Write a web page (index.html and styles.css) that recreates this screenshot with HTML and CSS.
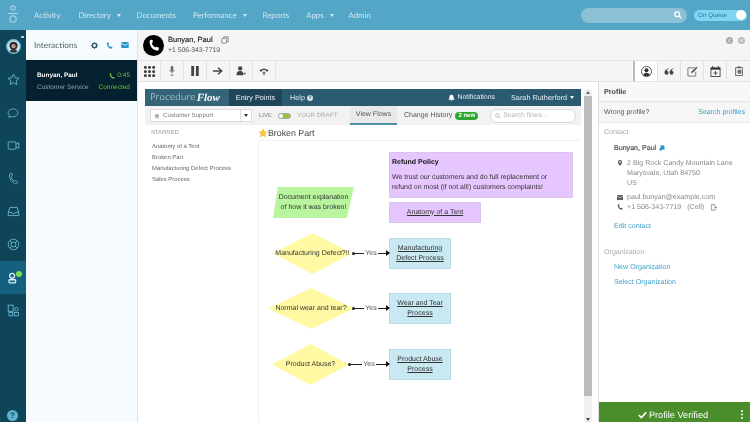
FILE: index.html
```html
<!DOCTYPE html>
<html lang="en">
<head>
<meta charset="utf-8">
<title>Interactions</title>
<link rel="stylesheet" href="styles.css">
</head>
<body>
<div class="app">
  <header class="top">
    <svg class="logo" viewBox="0 0 14 20" width="14" height="20"><circle cx="7" cy="3" r="2.2" class="ln"/><path d="M2 8.5h10" class="ln"/><circle cx="7" cy="14" r="3.2" class="ln"/></svg>
    <nav class="nav">
      <a class="n1">Activity</a>
      <a class="n2">Directory <i class="caret"></i></a>
      <a class="n3">Documents</a>
      <a class="n4">Performance <i class="caret"></i></a>
      <a class="n5">Reports</a>
      <a class="n6">Apps <i class="caret"></i></a>
      <a class="n7">Admin</a>
    </nav>
    <div class="global-search">
      <svg viewBox="0 0 10 10" width="8" height="8"><circle cx="4" cy="4" r="3" fill="none" stroke="#fff" stroke-width="1.6"/><path d="M6.3 6.3 9 9" stroke="#fff" stroke-width="1.8"/></svg>
    </div>
    <div class="queue"><span>On Queue</span><i></i></div>
  </header>
  <div class="body">
    <aside class="rail">
      <div class="avatar-wrap">
        <svg viewBox="0 0 20 20" width="15" height="15"><circle cx="10" cy="10" r="9" fill="#d8e6ea" stroke="#6fc3df" stroke-width="1.8"/><circle cx="10" cy="9" r="5.500" fill="#2c2a2c"/><circle cx="10" cy="9.500" r="2.800" fill="#b99d93"/><path d="M5 16c2-3 8-3 10 0l-2 2H7z" fill="#333"/></svg>
        <b class="dots"></b>
      </div>
      <a class="rail-item"><svg viewBox="0 0 16 16" width="13" height="13"><path d="m8 1.500 2 4.300 4.700.6-3.500 3.200.9 4.700L8 12l-4.100 2.300.9-4.700L1.300 6.400 6 5.800z" class="ri"/></svg></a>
      <a class="rail-item"><svg viewBox="0 0 16 16" width="12" height="12"><path d="M8 2.500c3.600 0 6.500 2.300 6.500 5.200S11.600 13 8 13c-.9 0-1.800-.1-2.500-.4L2.500 14l.7-3C2 10 1.500 9 1.500 7.700 1.500 4.800 4.400 2.500 8 2.500z" class="ri"/></svg></a>
      <a class="rail-item"><svg viewBox="0 0 16 16" width="13" height="13"><rect x="1.500" y="3.500" width="9.500" height="9" rx="1" class="ri"/><path d="M11 6.500 14.500 4.500v7L11 9.500" class="ri"/></svg></a>
      <a class="rail-item"><svg viewBox="0 0 16 16" width="13" height="13"><path d="M4 1.500 6 2c.3 1.500.4 2.300.2 3.500l-1 .8c.6 2 1.700 3.700 3.500 5l1.300-.6c1-.2 2 .4 3 1.500l-.7 1.800c-1 .8-2.200.6-3.200 0C5.500 11.800 3.500 8.500 3 5c-.1-1.500.2-2.700 1-3.500z" class="ri"/></svg></a>
      <a class="rail-item"><svg viewBox="0 0 16 16" width="13" height="13"><path d="M1.500 9 3.500 3h9l2 6v4h-13zM1.500 9h4.200l.8 1.500h3l.8-1.500h4.200" class="ri"/></svg></a>
      <a class="rail-item"><svg viewBox="0 0 16 16" width="13" height="13"><circle cx="8" cy="8" r="6.500" class="ri"/><circle cx="8" cy="8" r="3" class="ri"/><path d="M3.500 3.500 6 6M12.500 3.500 10 6M3.500 12.500 6 10M12.500 12.500 10 10" class="ri"/></svg></a>
      <a class="rail-item active"><svg viewBox="0 0 16 16" width="14" height="14"><circle cx="7" cy="5.500" r="2.800" class="rw"/><rect x="3.500" y="10" width="7.500" height="3.500" rx=".8" class="rw"/></svg><b class="online"></b></a>
      <a class="rail-item"><svg viewBox="0 0 16 16" width="13" height="13"><rect x="1.500" y="1.500" width="6" height="7.500" class="ri"/><circle cx="11.500" cy="6.500" r="2.200" class="ri"/><rect x="2.500" y="10.500" width="4.500" height="4" class="ri"/><rect x="9" y="10.500" width="5" height="4" class="ri"/></svg></a>
      <a class="help">?</a>
    </aside>
    <section class="interactions">
      <div class="int-head">
        <span>Interactions</span>
        <div class="int-tools">
          <svg viewBox="0 0 10 10" width="7" height="7"><circle cx="5" cy="5" r="3" fill="none" stroke="#34596b" stroke-width="2"/><path d="M5 0v2M5 8v2M0 5h2M8 5h2M1.500 1.500l1.400 1.400M7.100 7.100l1.400 1.400M8.500 1.500 7.100 2.900M2.900 7.100 1.500 8.500" stroke="#34596b" stroke-width="1.200"/></svg>
          <svg viewBox="0 0 10 10" width="7" height="7"><path d="M2 .5 4 1 3.800 3.200 3.200 3.800C3.800 5.200 4.800 6.300 6 7l.9-.6 2.300.8-.4 2.100C7 10 4.500 9 2.800 6.800 1.200 4.800.8 2 2 .5z" fill="#2a94c6"/></svg>
          <svg viewBox="0 0 10 8" width="8" height="6"><rect width="10" height="8" rx="1" fill="#2a94c6"/><path d="m0 1.500 5 3 5-3" fill="none" stroke="#f5fbff" stroke-width="1"/></svg>
        </div>
      </div>
      <div class="card">
        <div class="card-row"><b>Bunyan, Paul</b><span class="time"><svg viewBox="0 0 10 10" width="6" height="6"><path d="M2 .5 4 1 3.800 3.200 3.200 3.800C3.800 5.200 4.800 6.300 6 7l.9-.6 2.300.8-.4 2.100C7 10 4.500 9 2.800 6.800 1.200 4.800.8 2 2 .5z" fill="#6fbf3a"/></svg> 0:45</span></div>
        <div class="card-row sub"><span>Customer Service</span><span class="ok">Connected</span></div>
      </div>
    </section>
    <main class="main">
      <div class="call-head">
        <span class="callicon"><svg viewBox="0 0 10 10" width="12" height="12"><path d="M2 .5 4 1 3.800 3.200 3.200 3.800C3.800 5.200 4.800 6.300 6 7l.9-.6 2.300.8-.4 2.100C7 10 4.500 9 2.800 6.800 1.200 4.800.8 2 2 .5z" fill="#fff"/></svg></span>
        <div class="call-id">
          <div class="call-name">Bunyan, Paul <svg viewBox="0 0 10 10" width="8" height="8"><rect x="1" y="3" width="6" height="6" rx="1" class="cp"/><path d="M3.500 3V1h5.500v6H7" class="cp"/></svg></div>
          <div class="call-phone">+1 506-343-7719</div>
        </div>
        <div class="nav-dots">
          <svg viewBox="0 0 8 8" width="7" height="7"><circle cx="4" cy="4" r="4" fill="#aaa"/><path d="M4.800 2 3 4l1.800 2" fill="none" stroke="#fff"/></svg>
          <svg viewBox="0 0 8 8" width="7" height="7"><circle cx="4" cy="4" r="4" fill="#bbb"/><path d="m2.500 2.500 3 3m0-3-3 3" fill="none" stroke="#fff" stroke-width=".8"/></svg>
        </div>
      </div>
      <div class="toolbar">
        <div class="tool-group">
          <a class="tool"><svg viewBox="0 0 12 12" width="11" height="11"><g fill="#3a3a3a"><rect x="0" y="0" width="3" height="3" rx="1"/><rect x="4.500" y="0" width="3" height="3" rx="1"/><rect x="9" y="0" width="3" height="3" rx="1"/><rect x="0" y="4.500" width="3" height="3" rx="1"/><rect x="4.500" y="4.500" width="3" height="3" rx="1"/><rect x="9" y="4.500" width="3" height="3" rx="1"/><rect x="0" y="9" width="3" height="3" rx="1"/><rect x="4.500" y="9" width="3" height="3" rx="1"/><rect x="9" y="9" width="3" height="3" rx="1"/></g></svg></a>
          <a class="tool"><svg viewBox="0 0 12 12" width="10" height="10"><rect x="4.500" y="0" width="3" height="7" rx="1.500" fill="#666"/><path d="M3 5c0 3 6 3 6 0M6 8v3M4 11.500h4" fill="none" stroke="#888" stroke-width="1"/></svg></a>
          <a class="tool"><svg viewBox="0 0 12 12" width="10" height="10"><rect x="1.500" width="3.400" height="12" fill="#444"/><rect x="7.100" width="3.400" height="12" fill="#444"/></svg></a>
          <a class="tool"><svg viewBox="0 0 12 12" width="10" height="10"><path d="M0 6h10M6 2l4.500 4L6 10" fill="none" stroke="#444" stroke-width="1.700"/></svg></a>
          <a class="tool"><svg viewBox="0 0 12 12" width="10" height="10"><circle cx="5" cy="3" r="2.600" fill="#444"/><path d="M.5 11c0-3.500 1.500-5 4.500-5s4 1.500 4 5z" fill="#444"/><path d="M9 9h3M10.500 7.500v3" stroke="#666" stroke-width=".9"/></svg></a>
          <a class="tool"><svg viewBox="0 0 12 12" width="10" height="10"><path d="M.5 5.500C3 2.500 9 2.500 11.500 5.500L10 7 8 6V4.800H4V6L2 7z" fill="#444"/><path d="M6 11V7M4.300 8.500 6 7l1.700 1.500" fill="none" stroke="#444" stroke-width="1.200"/></svg></a>
        </div>
        <div class="tool-group right">
          <a class="tool cur"><svg viewBox="0 0 12 12" width="11" height="11"><circle cx="6" cy="6" r="5.500" fill="none" stroke="#333" stroke-width=".9"/><circle cx="6" cy="4.600" r="2.200" fill="#333"/><path d="M2.500 10c.5-2 2-2.700 3.500-2.700s3 .7 3.500 2.700C7.500 11.300 4.500 11.300 2.500 10z" fill="#333"/></svg></a>
          <a class="tool"><svg viewBox="0 0 12 8" width="10" height="7"><path d="M5.300 0C2.800.8.600 2.500.600 5.300a2.400 2.400 0 1 0 2.400-2.300C3.500 2 4.300 1.300 5.500 1zM11.300 0C8.800.8 6.600 2.500 6.600 5.300A2.400 2.400 0 1 0 9 3c.5-1 1.300-1.700 2.500-2z" fill="#444"/></svg></a>
          <a class="tool"><svg viewBox="0 0 12 12" width="11" height="11"><path d="M8.500 2H1v9h8.500V6" fill="none" stroke="#666" stroke-width=".9"/><path d="M4.500 8 5 6 10.300.7l1.200 1.200L6.200 7.300z" fill="#555"/></svg></a>
          <a class="tool"><svg viewBox="0 0 12 12" width="11" height="11"><rect x="1" y="2" width="10" height="9.500" fill="none" stroke="#333" stroke-width=".9"/><path d="M1 2h10v2H1z" fill="#333"/><path d="M3 0v3M9 0v3" stroke="#333"/><path d="M6 5.500v4.500M3.800 7.700h4.400" stroke="#444"/></svg></a>
          <a class="tool last"><svg viewBox="0 0 12 12" width="10" height="10"><path d="M3.500 2H2v9.500h8V2H8.500" fill="none" stroke="#444"/><rect x="4" y=".7" width="4" height="2" fill="#444"/><circle cx="6.500" cy="7" r="2.500" fill="#555"/><path d="m5.300 7 1 1 1.500-1.700" fill="none" stroke="#fff" stroke-width=".7"/></svg></a>
        </div>
      </div>
      <div class="split">
        <div class="work">
          <div class="pf">
            <div class="pf-bar">
              <div class="brand"><span class="brand-a">Procedure</span><span class="brand-b">Flow</span></div>
              <a class="pf-tab">Entry Points</a>
              <a class="pf-help">Help <i>?</i></a>
              <div class="pf-right">
                <span class="pf-note"><svg viewBox="0 0 10 10" width="7" height="8"><path d="M5 .5c2 0 3 1.500 3 3.500 0 2 1 3 1.500 3.500h-9C1 7 2 6 2 4 2 2 3 .5 5 .5z" fill="#fff"/><path d="M4 8.500h2v1H4z" fill="#fff"/></svg> Notifications</span>
                <span class="pf-user">Sarah Rutherford <i class="caret w"></i></span>
              </div>
            </div>
            <div class="pf-sub">
              <div class="select"><span class="sel-val"><svg viewBox="0 0 10 10" width="6" height="6"><path d="M5 1 .5 5H2v4h2.300V6.500h1.400V9H8V5h1.500z" fill="#aaa"/></svg> Customer Support</span><span class="sel-c"><i class="caret d"></i></span></div>
              <span class="live">LIVE</span>
              <span class="toggle"><i></i></span>
              <span class="draft">YOUR DRAFT</span>
              <a class="tab on">View Flows</a>
              <a class="tab">Change History</a>
              <span class="badge">2 new</span>
              <div class="flow-search"><svg viewBox="0 0 10 10" width="6" height="6"><circle cx="4" cy="4" r="3" fill="none" stroke="#aaa" stroke-width="1.200"/><path d="M6.300 6.300 9 9" stroke="#aaa" stroke-width="1.400"/></svg> Search flows...</div>
            </div>
            <div class="pf-body">
              <div class="starred">
                <h4>STARRED</h4>
                <ul>
                  <li>Anatomy of a Tent</li>
                  <li>Broken Part</li>
                  <li>Manufacturing Defect Process</li>
                  <li>Sales Process</li>
                </ul>
              </div>
              <div class="flow">
                <h2><svg viewBox="0 0 16 16" width="10" height="10"><path d="m8 .5 2.300 5 5.200.6-3.800 3.600 1 5.300L8 12.300 3.300 15l1-5.300L.5 6.100l5.200-.6z" fill="#f4c542"/></svg>Broken Part</h2>
                <div class="canvas">
                  <div class="node policy"><b>Refund Policy</b><p>We trust our customers and do full replacement or refund on most (if not all!) customers complaints!</p></div>
                  <div class="node anatomy"><u>Anatomy of a Tent</u></div>
                  <div class="node para"><span>Document explanation<br>of how it was broken!</span></div>
                  <div class="node dia d1">Manufacturing Defect?!!</div>
                  <div class="node dia d2">Normal wear and tear?</div>
                  <div class="node dia d3">Product Abuse?</div>
                  <div class="node box b1"><u>Manufacturing Defect Process</u></div>
                  <div class="node box b2"><u>Wear and Tear Process</u></div>
                  <div class="node box b3"><u>Product Abuse Process</u></div>
                  <div class="link l1"><span>Yes</span></div>
                  <div class="link l2"><span>Yes</span></div>
                  <div class="link l3"><span>Yes</span></div>
                </div>
              </div>
            </div>
          </div>
          <div class="scroll"><i class="up"></i><b></b><i class="down"></i></div>
        </div>
        <aside class="profile">
          <div class="pr-head">Profile</div>
          <div class="pr-wrong"><span>Wrong profile?</span><a>Search profiles</a></div>
          <div class="pr-content">
            <h5>Contact</h5>
            <div class="pr-name">Bunyan, Paul <svg viewBox="0 0 10 10" width="6" height="6"><path d="M1 1h8v8L6.500 6.500 3 10 0 7l3.500-3.500z" fill="#2a94c6"/></svg></div>
            <div class="pr-line addr"><svg viewBox="0 0 10 10" width="6" height="6"><path d="M5 0a3.500 3.500 0 0 0-3.500 3.500C1.500 6 5 10 5 10s3.500-4 3.500-6.500A3.500 3.500 0 0 0 5 0zm0 5a1.500 1.500 0 1 1 0-3 1.500 1.500 0 0 1 0 3z" fill="#555"/></svg><span>2 Big Rock Candy Mountain Lane<br>Marysvale, Utah 84750<br>US</span></div>
            <div class="pr-line mail"><svg viewBox="0 0 10 8" width="6" height="5"><rect width="10" height="8" fill="#555"/><path d="m0 1.500 5 3 5-3" fill="none" stroke="#fff"/></svg><span>paul.bunyan@example.com</span></div>
            <div class="pr-line tel"><svg viewBox="0 0 10 10" width="6" height="6"><path d="M2 .5 4 1 3.800 3.200 3.200 3.800C3.800 5.200 4.800 6.300 6 7l.9-.6 2.300.8-.4 2.100C7 10 4.500 9 2.800 6.800 1.200 4.800.8 2 2 .5z" fill="#555"/></svg><span>+1 506-343-7719 &nbsp; (Cell)</span><svg class="dev" viewBox="0 0 10 10" width="6" height="7"><path d="M6.500 2.500V.5h-6v9h6v-2" fill="none" stroke="#555"/><path d="M3 5h4V3l3 2-3 2V5.500" fill="#555"/></svg></div>
            <a class="pr-link edit">Edit contact</a>
            <h5 class="org">Organization</h5>
            <a class="pr-link">New Organization</a>
            <a class="pr-link">Select Organization</a>
          </div>
          <div class="verified"><span><svg viewBox="0 0 12 10" width="9" height="8"><path d="m1 5 3.500 3.500L11 1.500" fill="none" stroke="#fff" stroke-width="2.200"/></svg> Profile Verified</span><i class="kebab"></i></div>
        </aside>
      </div>
    </main>
  </div>
</div>
</body>
</html>
```
FILE: styles.css
```css
* { box-sizing: border-box; }
html, body { margin: 0; height: 100%; overflow: hidden; }
body { font-family: "Liberation Sans", Arial, sans-serif; color: #444; background: #fff; text-rendering: geometricPrecision; }
a { display: block; }
i { font-style: normal; }
svg { display: block; flex: none; }
.app { width: 750px; height: 422px; display: flex; flex-direction: column; overflow: hidden; filter: blur(.25px); }

/* top bar */
.top { height: 30px; background: #53a6c6; display: flex; align-items: center; padding-left: 6px; flex: none; }
.logo .ln { fill: none; stroke: #a5d3e5; stroke-width: 1.2; }
.nav { display: flex; font: 7.800px Lato, sans-serif; color: #d3e9f2; margin-left: 14px; width: 547px; flex: none; }
.nav a { white-space: nowrap; }
.n2 { margin-left: 18px; } .n3 { margin-left: 16px; } .n4 { margin-left: 17px; }
.n5 { margin-left: 16px; } .n6 { margin-left: 17px; } .n7 { margin-left: 15px; }
.caret { display: inline-block; border: 2.500px solid transparent; border-top: 3px solid #d3e9f2; border-bottom: 0; margin-left: 4px; vertical-align: 1px; }
.caret.w { border-top-color: #fff; margin-left: 1px; }
.caret.d { border-top-color: #333; margin: 0; }
.global-search { width: 106px; height: 15px; border-radius: 8px; background: #8cc0d5; display: flex; align-items: center; justify-content: flex-end; padding-right: 5px; }
.queue { width: 53px; height: 11px; border-radius: 6px; background: #7fd6f2; margin-left: 7px; display: flex; align-items: center; justify-content: space-between; padding-left: 4px; font: 6.300px "Liberation Sans", sans-serif; color: #2a7a9a; }
.queue i { width: 10px; height: 10px; border-radius: 50%; background: #fff; margin-right: 1px; }

.body { flex: 1; display: flex; min-height: 0; }

/* rail */
.rail { width: 26px; background: #0f4558; display: flex; flex-direction: column; align-items: stretch; position: relative; flex: none; }
.avatar-wrap { height: 33px; display: flex; align-items: center; justify-content: center; position: relative; }
.dots { position: absolute; right: 2px; top: 6px; width: 3px; height: 2px; background: #9fd4e6; }
.rail-item { height: 33px; display: flex; align-items: center; justify-content: center; position: relative; }
.rail-item.active { background: #15607e; }
.ri { fill: none; stroke: #6db6d2; stroke-width: 1.100; }
.rw { fill: none; stroke: #d9eef6; stroke-width: 1.500; }
.online { position: absolute; right: 4px; top: 10px; width: 6px; height: 6px; border-radius: 50%; background: #7be04b; }
.help { position: absolute; left: 7px; bottom: 1px; width: 11px; height: 11px; border-radius: 50%; background: #5fb2d0; color: #0f4558; font: bold 8px/11px "Liberation Sans", sans-serif; text-align: center; }

/* interactions */
.interactions { width: 112px; background: #f5fbff; border-right: 1px solid #dfe3e6; flex: none; }
.int-head { height: 30px; display: flex; align-items: center; justify-content: space-between; padding: 0 8px; font: 8.300px Lato, sans-serif; color: #566; }
.int-tools { display: flex; align-items: center; gap: 8px; }
.card { height: 41px; background: #05202f; padding: 10px 7px 0 11px; }
.card-row { display: flex; justify-content: space-between; align-items: center; font-size: 6.500px; color: #fff; height: 11px; }
.card-row b { font-size: 6.400px; }
.time { color: #6fbf3a; display: flex; align-items: center; gap: 2px; }
.sub { color: #8fa5ad; margin-top: 1px; }
.ok { color: #6fbf3a; }

/* main */
.main { flex: 1; display: flex; flex-direction: column; background: #fff; min-width: 0; }
.call-head { height: 30px; background: #f5f5f5; display: flex; align-items: center; padding: 0 5px; }
.callicon { width: 21px; height: 21px; border-radius: 50%; background: #000; display: flex; align-items: center; justify-content: center; }
.call-id { margin-left: 4px; flex: 1; }
.call-name { font-size: 7.500px; color: #222; display: flex; align-items: center; gap: 8px; line-height: 11px; -webkit-text-stroke: .15px #222; }
.cp { fill: none; stroke: #666; stroke-width: .9; }
.call-phone { font-size: 6.800px; color: #555; line-height: 11px; }
.nav-dots { display: flex; gap: 5px; align-self: flex-start; margin-top: 7px; }
.toolbar { height: 22px; background: #f5f5f5; border-top: 1px solid #e3e3e3; border-bottom: 1px solid #e3e3e3; display: flex; justify-content: space-between; flex: none; }
.tool-group { display: flex; }
.tool-group.right { border-left: 2px solid #bcbcbc; }
.tool { width: 23px; height: 100%; display: flex; align-items: center; justify-content: center; border-right: 1px solid #e3e3e3; }
.tool.cur { background: #fff; }
.tool.last { border-right: 0; }

.split { flex: 1; display: flex; min-height: 0; }
.work { width: 460px; display: flex; padding: 7px 6px 0 7px; gap: 3px; flex: none; }
.pf { width: 436px; display: flex; flex-direction: column; }
.pf-bar { height: 17px; background: #2a5a70; display: flex; align-items: center; color: #eef; font-size: 7.300px; line-height: 10px; flex: none; }
.brand { width: 84px; height: 100%; background: #336478; display: flex; align-items: center; padding-left: 5px; color: #d8e6ec; }
.brand-a { font: 300 9.500px Lato, sans-serif; letter-spacing: .45px; }
.brand-b { font: italic bold 11px "Liberation Serif", serif; color: #fff; margin-left: 1px; }
.pf-tab { width: 53px; height: 100%; background: #1f4658; display: flex; align-items: center; justify-content: center; }
.pf-help { margin-left: 8px; display: flex; align-items: center; gap: 2px; color: #d6e3e9; }
.pf-help i { width: 6px; height: 6px; background: #d6e3e9; color: #2a5a70; border-radius: 50%; font: bold 5px/6px "Liberation Sans", sans-serif; text-align: center; }
.pf-right { margin-left: auto; display: flex; align-items: center; gap: 16px; padding-right: 7px; color: #e6eef2; }
.pf-note { display: flex; align-items: center; gap: 2px; font-size: 6.900px; }
.pf-sub { height: 19px; background: #f2f2f2; display: flex; align-items: center; padding-left: 5px; color: #666; flex: none; white-space: nowrap; }
.select { width: 102px; height: 13px; background: #fff; border: 1px solid #dcdcdc; display: flex; font-size: 6.200px; color: #777; flex: none; }
.sel-val { flex: 1; display: flex; align-items: center; gap: 3px; padding-left: 3px; }
.sel-c { width: 11px; border-left: 1px solid #dcdcdc; display: flex; align-items: center; justify-content: center; }
.live { margin-left: 7px; width: 13px; font-size: 6px; color: #777; flex: none; }
.toggle { width: 13px; height: 6px; margin-left: 6px; border-radius: 3px; background: #9ac23c; border: 1px solid #aaa; position: relative; flex: none; }
.toggle i { position: absolute; left: 0; top: 0; width: 4px; height: 4px; border-radius: 50%; background: #fff; }
.draft { margin-left: 6px; font-size: 6.200px; color: #aaa; width: 53px; flex: none; }
.tab { height: 19px; line-height: 19px; padding: 0 7px; font-size: 7px; color: #555; flex: none; }
.tab.on { background: #e9e9e9; border-bottom: 2px solid #4d8eab; line-height: 18px; width: 47px; padding: 0; text-align: center; }
.badge { background: #2fa52f; color: #fff; font: bold 6px/8px "Liberation Sans", sans-serif; border-radius: 4px; width: 23px; height: 8px; text-align: center; margin-left: -4px; flex: none; }
.flow-search { width: 86px; height: 14px; border-radius: 7px; border: 1px solid #d8d8d8; background: #fff; margin-left: 12px; display: flex; align-items: center; gap: 2px; padding-left: 4px; font-size: 6.800px; color: #b5b5b5; flex: none; }
.pf-body { flex: 1; display: flex; min-height: 0; }
.starred { width: 113px; padding: 4px 0 0 6px; flex: none; }
.starred h4 { margin: 0; font: 400 5.900px/8px "Liberation Sans", sans-serif; color: #999; }
.starred ul { list-style: none; margin: 5px 0 0 1px; padding: 0; font-size: 5.900px; line-height: 11px; color: #666; }
.flow { flex: 1; position: relative; min-width: 0; }
.flow h2 { margin: 0; height: 16px; padding-top: 1px; display: flex; align-items: center; font: 400 8.800px "Liberation Sans", sans-serif; color: #444; border-bottom: 1px solid #f0f0f0; }
.canvas { position: relative; height: 300px; border-left: 1px solid #f0f0f0; isolation: isolate; }
.node { position: absolute; font-size: 7px; line-height: 10px; color: #333; display: flex; align-items: center; justify-content: center; text-align: center; }
.policy { left: 130px; top: 11px; width: 184px; height: 46px; background: #e6c6ff; border: 1px solid #dcc2ee; display: block; text-align: left; padding: 5px 12px 5px 2px; }
.policy b { color: #111; display: block; }
.policy p { margin: 5px 0 0; }
.anatomy { left: 130px; top: 61px; width: 92px; height: 21px; background: #e6c6ff; border: 1px solid #dcc2ee; }
.para { left: 14px; top: 46px; width: 81px; height: 31px; white-space: nowrap; }
.para::before { content: ""; position: absolute; inset: 0; z-index: -1; background: #b8f59e; clip-path: polygon(6% 0, 100% 0, 91% 100%, 0 100%); }
.dia { white-space: nowrap; }
.dia::before { content: ""; position: absolute; inset: 0; z-index: -1; background: #fff9a3; clip-path: polygon(50% 0, 100% 50%, 50% 100%, 0 50%); }
.d1 { left: 14px; top: 92px; width: 79px; height: 41px; }
.d2 { left: 9px; top: 147px; width: 86px; height: 41px; }
.d3 { left: 13px; top: 203px; width: 77px; height: 41px; }
.box { left: 130px; width: 62px; height: 31px; background: #c8e8f2; border: 1px solid #bcdde8; padding: 0 3px; }
.b1 { top: 97px; } .b2 { top: 152px; } .b3 { top: 208px; }
.link { position: absolute; height: 1px; background: #222; display: flex; justify-content: center; align-items: center; font-size: 7px; }
.link span { background: #fff; padding: 0 1px; color: #555; }
.link::before { content: ""; position: absolute; left: -1px; top: -1px; width: 3px; height: 3px; border-radius: 50%; background: #222; }
.link::after { content: ""; position: absolute; right: -1px; top: -3px; border-left: 4px solid #111; border-top: 3.500px solid transparent; border-bottom: 3.500px solid transparent; }
.l1 { left: 94px; top: 112px; width: 36px; }
.l2 { left: 94px; top: 167px; width: 36px; }
.l3 { left: 90px; top: 223px; width: 40px; }
.scroll { width: 8px; background: #f0f0f0; display: flex; flex-direction: column; align-items: center; flex: none; }
.scroll b { width: 8px; height: 300px; background: #bcbcbc; margin-top: 2px; flex: none; }
.up, .down { display: block; border: 2px solid transparent; }
.up { border-bottom: 3px solid #666; border-top: 0; margin-top: 2px; }
.down { border-top: 3px solid #444; border-bottom: 0; margin-top: auto; margin-bottom: 1px; }

/* profile */
.profile { flex: 1; border-left: 1px solid #dcdcdc; background: #fff; display: flex; flex-direction: column; min-width: 0; }
.pr-head { height: 20px; background: #f8f8f8; border-bottom: 1px solid #e3e3e3; display: flex; align-items: center; padding-left: 5px; font-size: 7.200px; font-weight: 700; color: #444; flex: none; }
.pr-wrong { height: 21px; background: #f6f6f6; border-bottom: 1px solid #e8e8e8; display: flex; align-items: center; justify-content: space-between; padding: 0 5px; font-size: 7px; color: #555; flex: none; }
.pr-wrong a { color: #3d9ec9; }
.pr-content { flex: 1; padding: 4px 0 0 5px; font-size: 7.100px; color: #777; }
.pr-content h5 { margin: 0; font: 400 7.100px/10px "Liberation Sans", sans-serif; color: #aaa; }
.pr-name { margin: 6px 0 0 10px; line-height: 10px; color: #555; -webkit-text-stroke: .2px #555; display: flex; align-items: center; gap: 3px; }
.pr-line { display: flex; gap: 4px; margin-left: 13px; line-height: 10px; color: #888; white-space: nowrap; }
.addr { margin-top: 5px; align-items: flex-start; }
.addr svg { margin-top: 2px; }
.mail { margin-top: 4px; align-items: center; }
.tel { align-items: center; }
.dev { margin-left: 3px; }
.pr-link { color: #3d9ec9; margin: 5px 0 0 10px; line-height: 10px; }
.edit { margin-top: 9px; }
.pr-content .org { margin-top: 16px; }
.verified { height: 20px; background: #4a8e2b; color: #fff; font-size: 9.200px; display: flex; align-items: center; justify-content: center; position: relative; flex: none; }
.verified span { display: flex; align-items: center; gap: 2px; margin-left: -3px; padding-top: 5px; }
.kebab { position: absolute; right: 7px; top: 8px; width: 2px; height: 2px; background: #fff; box-shadow: 0 3.500px #fff, 0 7px #fff; border-radius: 50%; }
```
